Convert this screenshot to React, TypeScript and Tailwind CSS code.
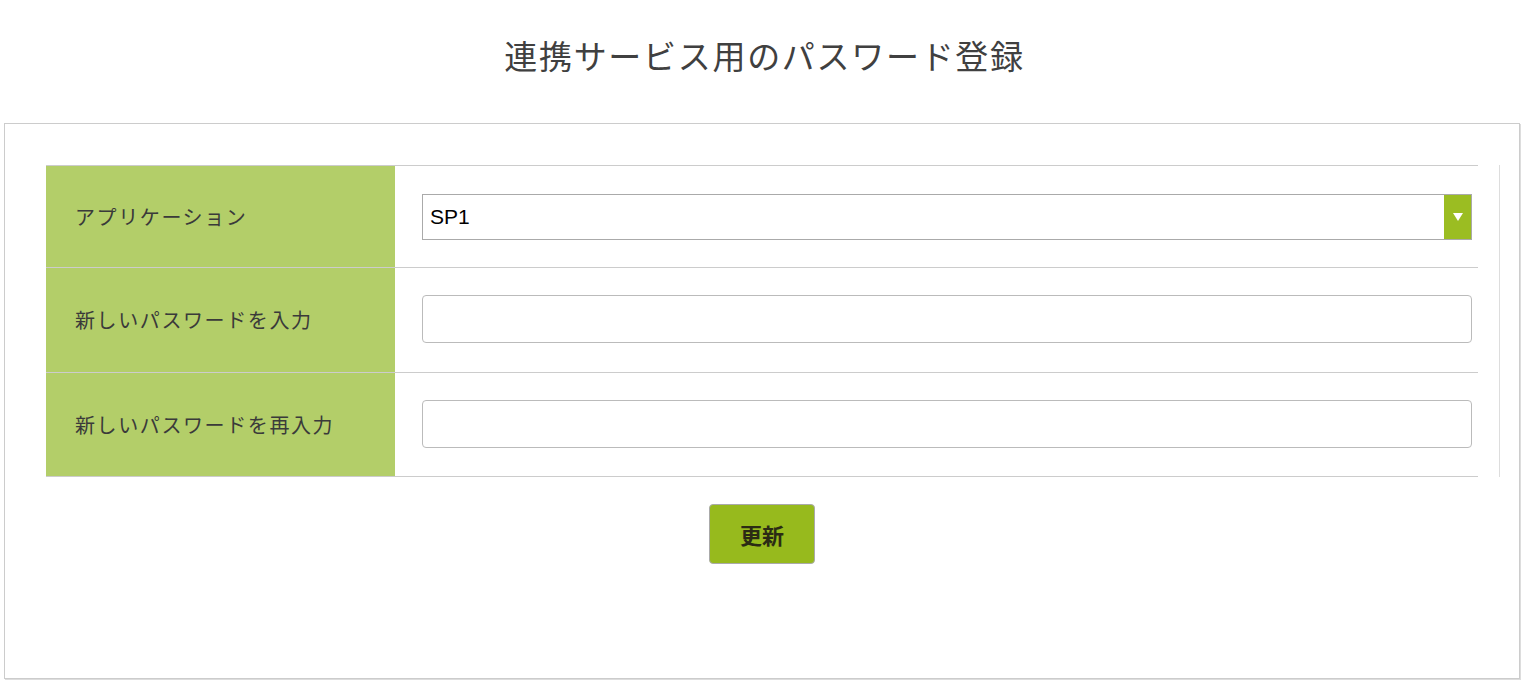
import React from "react";

const jp = "font-['Noto_Sans_CJK_JP','Noto_Sans',sans-serif]";

const Row = ({
  label,
  pad,
  children,
}: {
  label: string;
  pad: string;
  children: React.ReactNode;
}) => {
  return (
    <div className="flex border-b border-[#cccccc]">
      <div
        className={`w-[349px] shrink-0 bg-[#b3ce69] pl-[29px] flex items-center text-[20px] tracking-[1.6px] text-[#3a3a3a] ${jp}`}
      >
        {label}
      </div>
      <div className={`flex-1 pl-[27px] pr-[6px] ${pad}`}>{children}</div>
    </div>
  );
};

const App = () => {
  return (
    <div className={`min-h-[693px] bg-white ${jp}`}>
      <h1 className="h-[123px] pt-[33px] text-center text-[33px] leading-[44px] tracking-[1.7px] text-[#404040]">
        連携サービス用のパスワード登録
      </h1>

      <div className="ml-[4px] w-[1516px] h-[556px] border border-[#cccccc] shadow-[1px_1px_0_#dddddd] pt-[41px] pl-[41px]">
        <div className="w-[1454px] border-r border-[#dddddd]">
          <div className="w-[1432px] border-t border-[#cccccc]">
            <Row label="アプリケーション" pad="pt-[28px] pb-[27px]">
              <div className="flex h-[46px] border border-[#aaaaaa] bg-white">
                <div className="flex-1 pl-[7px] flex items-center text-[21px] text-black font-['Liberation_Sans',Arial,sans-serif]">
                  SP1
                </div>
                <div className="w-[27px] bg-[#9bbd22] flex items-center justify-center">
                  <svg width="10" height="8" viewBox="0 0 10 8">
                    <polygon points="0,0 10,0 5,8" fill="#ffffff" />
                  </svg>
                </div>
              </div>
            </Row>
            <Row label="新しいパスワードを入力" pad="pt-[27px] pb-[29px]">
              <input
                type="password"
                className="block w-full h-[48px] rounded-[4px] border border-[#bbbbbb] bg-white outline-none"
              />
            </Row>
            <Row label="新しいパスワードを再入力" pad="pt-[27px] pb-[28px]">
              <input
                type="password"
                className="block w-full h-[48px] rounded-[4px] border border-[#bbbbbb] bg-white outline-none"
              />
            </Row>
          </div>
        </div>

        <div className="w-[1432px] flex justify-center pt-[27px]">
          <button
            type="button"
            className="w-[106px] h-[60px] rounded-[4px] border border-[#aaaaaa] bg-[#97ba1d] text-[22px] font-bold text-[#2b2b14]"
          >
            更新
          </button>
        </div>
      </div>
    </div>
  );
};

export default App;
